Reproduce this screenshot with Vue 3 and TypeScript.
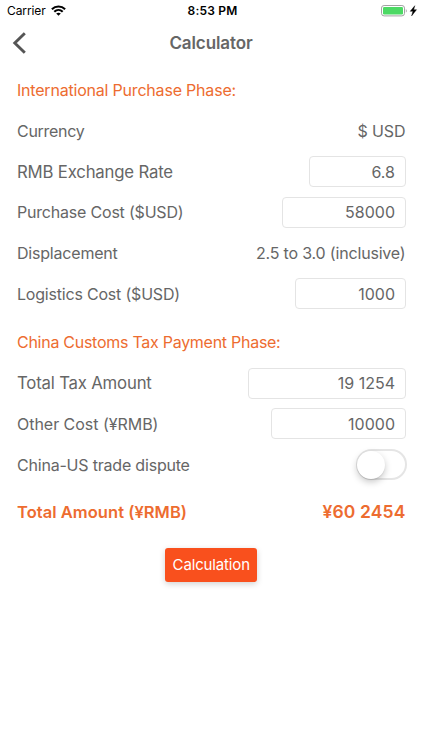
<script setup lang="ts">
import { ref } from 'vue'

interface Row {
  id: string
  label: string
  value: string
  kind: 'text' | 'input' | 'switch'
  width?: number
}

const purchase = ref<Row[]>([
  { id: 'currency', label: 'Currency', value: '$ USD', kind: 'text' },
  { id: 'rate', label: 'RMB Exchange Rate', value: '6.8', kind: 'input', width: 96.5 },
  { id: 'cost', label: 'Purchase Cost ($USD)', value: '58000', kind: 'input', width: 123.5 },
  { id: 'displacement', label: 'Displacement', value: '2.5 to 3.0 (inclusive)', kind: 'text' },
  { id: 'logistics', label: 'Logistics Cost ($USD)', value: '1000', kind: 'input', width: 111 },
])

const customs = ref<Row[]>([
  { id: 'tax', label: 'Total Tax Amount', value: '19 1254', kind: 'input', width: 157.5 },
  { id: 'other', label: 'Other Cost (¥RMB)', value: '10000', kind: 'input', width: 135 },
  { id: 'dispute', label: 'China-US trade dispute', value: '', kind: 'switch' },
])

const sections = [
  { title: 'International Purchase Phase:', id: 'intl', rows: purchase },
  { title: 'China Customs Tax Payment Phase:', id: 'customs', rows: customs },
]

const dispute = ref(false)
const total = ref('¥60 2454')
</script>

<template>
  <div class="screen">
    <div class="status">
      <div class="carrier">
        <span>Carrier</span>
        <svg width="15" height="11" viewBox="0 0 15 11">
          <g fill="none" stroke="#000" stroke-width="2.1">
            <path d="M.9 4.2C4.6.6 10.4.6 14.1 4.2" />
            <path d="M3.3 6.7c2.4-2.3 6-2.3 8.4 0" />
          </g>
          <path d="M7.5 10.8 5.2 8.5c1.3-1.1 3.3-1.1 4.6 0z" />
        </svg>
      </div>
      <span class="clock">8:53 PM</span>
      <div class="power">
        <svg width="37" height="12" viewBox="0 0 37 12">
          <rect x=".5" y=".5" width="23" height="10.4" rx="2.6" fill="#fff" stroke="#a2a2a2" />
          <rect x="2" y="2" width="20" height="7.4" rx="1.2" fill="#4cd964" />
          <path d="M24.8 4v3.6c1.3-.5 1.3-3.1 0-3.6z" fill="#a2a2a2" />
          <path d="M33.8.7 29.2 6.3h2.7l-1.3 4.6 4.9-6.2h-2.8z" fill="#000" stroke="#000" stroke-width=".4" />
        </svg>
      </div>
    </div>

    <header class="nav">
      <svg class="back" width="14" height="24" viewBox="0 0 14 24">
        <path d="M12.8 2.2 2.8 12l10 9.8" fill="none" stroke="#555" stroke-width="2.9" />
      </svg>
      <h1>Calculator</h1>
    </header>

    <main>
      <section v-for="s in sections" :key="s.id">
        <h2 :class="s.id">{{ s.title }}</h2>
        <div v-for="r in s.rows.value" :key="r.id" class="row">
          <label :class="r.id">{{ r.label }}</label>
          <span v-if="r.kind === 'text'" :class="['value', r.id]">{{ r.value }}</span>
          <input
            v-else-if="r.kind === 'input'"
            v-model="r.value"
            type="text"
            :style="{ width: r.width + 'px' }"
          />
          <button
            v-else
            type="button"
            role="switch"
            :aria-checked="dispute"
            :class="['switch', { on: dispute }]"
            @click="dispute = !dispute"
          >
            <span class="knob"></span>
          </button>
        </div>
      </section>
      <div class="row total">
        <span class="total-label">{{ 'Total Amount (¥RMB)' }}</span>
        <span class="total-value">{{ total }}</span>
      </div>
      <button class="submit" type="button">Calculation</button>
    </main>
  </div>
</template>

<style>
body {
  background: #fff;
}
</style>

<style scoped>
.screen {
  height: 750px;
  overflow: hidden;
  background: #fff;
  color: #666;
  font-family: Inter, "Noto Sans CJK SC", sans-serif;
  font-size: 16px;
}
.status {
  display: grid;
  grid-template-columns: 1fr auto 1fr;
  align-items: center;
  height: 21px;
  margin-bottom: 1px;
  padding: 0 4px 0 7px;
  color: #000;
  font-size: 12px;
}
.carrier {
  display: flex;
  align-items: center;
  gap: 5px;
  letter-spacing: -0.1px;
}
.clock {
  font-weight: 600;
  letter-spacing: 0.2px;
}
.power {
  display: flex;
  justify-content: flex-end;
}
.nav {
  display: grid;
  grid-template-columns: 1fr auto 1fr;
  align-items: center;
  height: 43px;
  padding: 0 12px;
}
h1 {
  margin: 0;
  font-size: 17px;
  font-weight: 600;
  letter-spacing: -0.1px;
  line-height: 22px;
  padding-bottom: 1px;
}
.back {
  margin-bottom: 1px;
}
main {
  display: flex;
  flex-direction: column;
  padding: 4.9px 16.5px 0 17px;
}
section + section {
  margin-top: 8.2px;
}
h2 {
  margin: 0;
  height: 40.7px;
  line-height: 40.7px;
  color: #ed6c30;
  font-size: 16px;
  font-weight: 400;
  white-space: nowrap;
  letter-spacing: -0.2px;
}
h2.customs {
  letter-spacing: -0.27px;
}
.row {
  display: flex;
  align-items: center;
  justify-content: space-between;
  height: 40.7px;
  white-space: nowrap;
}
label {
  letter-spacing: -0.2px;
}
label.currency {
  letter-spacing: -0.3px;
}
label.rate,
label.tax {
  font-size: 16.75px;
  letter-spacing: -0.19px;
}
label.other {
  letter-spacing: -0.03px;
}
.value.currency {
  letter-spacing: -0.1px;
}
.value.displacement {
  letter-spacing: -0.18px;
}
input {
  box-sizing: border-box;
  height: 31px;
  padding: 0 9.5px;
  border: 1px solid #e4e4e4;
  border-radius: 4px;
  outline: none;
  background: #fff;
  color: #666;
  font: inherit;
  text-align: right;
}
.switch {
  display: flex;
  align-items: center;
  box-sizing: border-box;
  width: 51px;
  height: 31px;
  margin-right: -1.5px;
  padding: 0;
  border: 2px solid #e5e5e5;
  border-radius: 16px;
  background: #fff;
}
.knob {
  width: 28px;
  height: 28px;
  margin-left: -1px;
  border-radius: 50%;
  background: #fff;
  box-shadow: 0 3px 7px rgba(0, 0, 0, 0.22), 0 1px 1px rgba(0, 0, 0, 0.08);
}
.switch.on {
  justify-content: flex-end;
  background: #4cd964;
}
.total {
  margin-top: 6.5px;
  color: #ed6c30;
  font-weight: 600;
}
.total-label {
  font-size: 16.5px;
  letter-spacing: 0.05px;
}
.total-value {
  font-size: 17.5px;
  letter-spacing: 0.12px;
}
.submit {
  align-self: center;
  width: 92px;
  height: 34px;
  margin-top: 15.5px;
  padding: 0;
  border: 0;
  border-radius: 3px;
  background: #f9501d;
  box-shadow: 0 2px 6px rgba(0, 0, 0, 0.18);
  color: #fff;
  font: inherit;
  font-size: 15px;
  letter-spacing: -0.15px;
}
</style>
